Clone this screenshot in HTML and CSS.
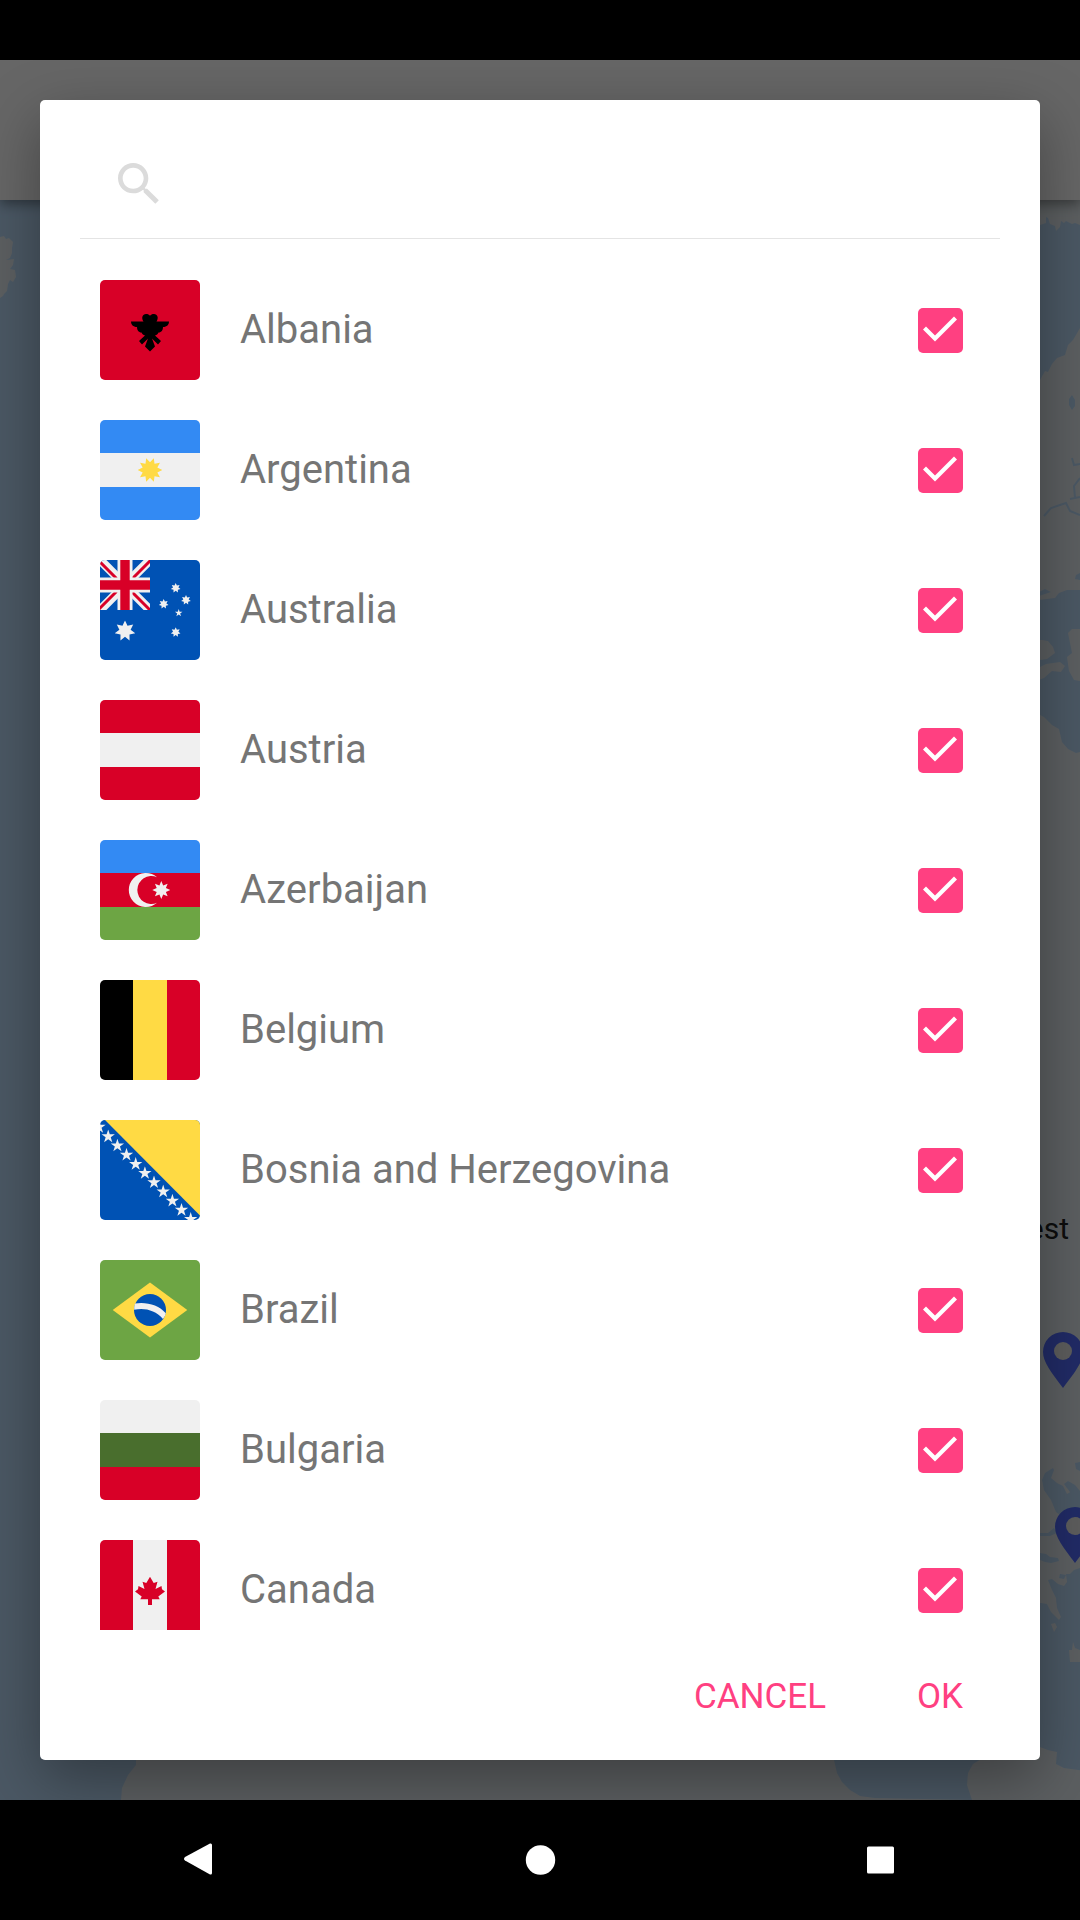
FILE: index.html
```html
<!DOCTYPE html>
<html lang="en">
<head>
<meta charset="utf-8">
<meta name="viewport" content="width=device-width, initial-scale=1">
<title>Countries</title>
<link rel="stylesheet" href="styles.css">
</head>
<body>
<svg class="symbols" aria-hidden="true">
  <symbol id="star5" viewBox="-10 -10 20 20"><path d="M0-10L2.25-3.09 9.51-3.09 3.63 1.18 5.88 8.09 0 3.82-5.88 8.09-3.63 1.18-9.51-3.09-2.25-3.09z"/></symbol>
  <symbol id="star7" viewBox="-10 -10 20 20"><path d="M0-10L2.39-4.95 7.82-6.23 5.36-1.22 9.75 2.23 4.3 3.43 4.34 9.01 0 5.5-4.34 9.01-4.3 3.43-9.75 2.23-5.36-1.22-7.82-6.23-2.39-4.95z"/></symbol>
</svg>
<div class="screen">
  <div class="status-bar"></div>
  <header class="app-bar"></header>
  <main class="map">
    <svg class="map-canvas" viewBox="0 0 1080 1600" preserveAspectRatio="xMidYMid slice" aria-hidden="true">
      <rect class="water" width="1080" height="1600"/>
      <g class="land">
        <path d="M0 37l4-1 2 3 3-1 4 4-1 6 0 5-2 5-4 2 8-1-1 6-3 4 5 1 1 7-3 5-3-2-2 4-1 7-3 3-1 2-3 2z"/>
        <path d="M900 0H1080V25l-5-2-3 1-6-3-2 2-3-2-1 6-4 4-1-5-5-2-2-6-2-1 0 6-6 2-60-2z"/>
        <path d="M900 180h140l5-9 3 1 4-8 5-6 8-3 3-10 5-5 7-12V390h-13l-8 3-4 5-16 2v-4l12-4-6-3-8 4-3-4-4 0-130 0z"/>
        <path d="M1020 440h22l6 1 5 6 2 6-8 6-7 1h-20zM1020 468h18l8-4 14-2 5 4-4 6-9-1-8 7-8 3h-16zM1068 433l4-4 8 0v52l-6-1-5-9-2-14 5-4z"/>
        <path d="M560 513H1036l8 4 8 8 7 4 3 13 6 7 8 4 4-1V1368l-6 2-4 4-4 0 1 8-3 4-6-2-6-5-4 1 4 10 4 8 1 10 4 9-2 3-8-8-4-8-6-1-30 6H560z"/>
        <path d="M1051 1424l4-1 2 4-3 5zM1069 1450l3 0 1-8 2 6 5 2v12h-10z"/>
        <path d="M136 1540H830l4 20 3 13 5 9 8 8 10 6 15 2 97 2H121l1-12 6-13 8-10z"/>
        <path d="M972 1600l-5-15 1-12 5-9 20-12 47-5 8 3 9 2-1 12 8 4 21 3v29z"/>
      </g>
      <g class="water">
        <path d="M1072 195l3 5 0 6-3 4-3-5 0-6z"/>
        <path d="M1076 375l4-2v7l-5-1z"/>
        <path d="M1053 1268l-8 5-3 7 2 10 7 10 5 12 8 6 16 4V1292l-8-1-5 3-4-8-6-3-6-5 3-8z"/>
        <path d="M1075 1263l5-1v9l-4-2zM1064 1284l4-3 7 4 5 6v5l-10-4z"/>
        <path d="M1040 1353l6 1 4 3 8 1 1 3-8 2-6-1-5-2zM1040 1333l8 0 6-5 3 5-7 3-10 0zM1060 1374l6 1-2 4-5-1z"/>
      </g>
      <g class="river">
        <path d="M1044 316l7-8 9-3 6-2 4 8 10 4M1072 258l2 7 6-1M1080 278l-6 8 1 12M1080 297l-10 2"/>
      </g>
      <text class="city" x="1069" y="1039" text-anchor="end">est</text>
      <g class="pin">
        <path d="M1063 1132a20 20 0 0 1 20 20c0 10-8 20-20 36c-12-16-20-26-20-36a20 20 0 0 1 20-20z"/>
        <circle class="pin-hole" cx="1063" cy="1151" r="9"/>
        <path d="M1075 1307a20 20 0 0 1 20 20c0 10-8 20-20 36c-12-16-20-26-20-36a20 20 0 0 1 20-20z"/>
        <circle class="pin-hole" cx="1075" cy="1326" r="9"/>
      </g>
    </svg>
  </main>
  <nav class="nav-bar">
    <button class="nav-button" aria-label="Back"><svg viewBox="0 0 40 40"><path d="M5 17L30 3.500Q32 3 32 5V33Q32 35 30 34.500L5 20.500Q3 19 5 17z"/></svg></button>
    <button class="nav-button" aria-label="Home"><svg viewBox="0 0 40 40"><circle cx="20.500" cy="20" r="14.700"/></svg></button>
    <button class="nav-button" aria-label="Recent apps"><svg viewBox="0 0 40 40"><rect x="7" y="6.500" width="27" height="27" rx="1.500"/></svg></button>
  </nav>

  <div class="overlay">
    <section class="dialog" role="dialog" aria-modal="true" aria-label="Select countries">
      <label class="search">
        <svg class="search-icon" viewBox="0 0 24 24" aria-hidden="true"><path d="M15.500 14h-.79l-.28-.27C15.410 12.590 16 11.110 16 9.500 16 5.910 13.090 3 9.500 3S3 5.910 3 9.500 5.910 16 9.500 16c1.610 0 3.090-.59 4.230-1.570l.27.28v.79l5 4.990L20.490 19l-4.990-5zm-6 0C7.010 14 5 11.990 5 9.500S7.010 5 9.500 5 14 7.010 14 9.500 11.990 14 9.500 14z"/></svg>
        <input class="search-input" type="text" aria-label="Search">
      </label>
      <ul class="countries">
        <li><label class="country">
          <svg class="flag" viewBox="0 0 100 100" aria-hidden="true"><rect class="red" width="100" height="100"/><path d="M31 41.500h12.500C41 38 42.500 34 46 34c2 0 3 .5 4 1.700C51 34.500 52 34 54 34c3.500 0 5 4 2.500 7.500H69c0 3-2 5.500-6 5.500 0 3-1.500 5.500-4.500 5.500-.5 1.500-2 2.500-3.500 3l6 5.500-3 3.500-6-6 3 8-5 5-5-5 3-8-6 6-3-3.500 6-5.500c-1.500-.5-3-1.500-3.500-3-3 0-4.500-2.500-4.500-5.500-4 0-6-2.500-6-5.500z"/></svg>
          <span class="name">Albania</span><input class="check" type="checkbox" checked></label></li>
        <li><label class="country">
          <svg class="flag" viewBox="0 0 100 100" aria-hidden="true"><rect class="sky" width="100" height="100"/><rect class="white" y="33" width="100" height="34"/><path class="yellow" transform="translate(50 50)" d="M12.300 0L7.320 2.380 9.950 7.230 4.530 6.230 3.800 11.700 0 7.700-3.800 11.700-4.530 6.230-9.950 7.230-7.320 2.380-12.300 0-7.320-2.380-9.950-7.230-4.530-6.230-3.800-11.700 0-7.700 3.800-11.700 4.530-6.230 9.950-7.230 7.320-2.380z"/></svg>
          <span class="name">Argentina</span><input class="check" type="checkbox" checked></label></li>
        <li><label class="country">
          <svg class="flag" viewBox="0 0 100 100" aria-hidden="true"><rect class="blue" width="100" height="100"/>
            <svg width="50" height="50" viewBox="0 0 50 50"><path stroke="#f0f0f0" stroke-width="9" d="M0 0L50 50M50 0L0 50"/><path stroke="#d80027" stroke-width="3" d="M-1 1L19 21M31 20L51 0M-1 49L19 29M31 31L51 51"/><path class="white" d="M17.500 0h15v17.500H50v15H32.500V50h-15V32.500H0v-15h17.500z"/><path class="red" d="M20.300 0h9.400v20.300H50v9.400H29.700V50h-9.400V29.700H0v-9.400h20.300z"/></svg>
            <g class="white"><use href="#star7" x="14.500" y="60.500" width="21" height="21"/><use href="#star7" x="70.700" y="23" width="10" height="10"/><use href="#star7" x="81" y="35" width="10" height="10"/><use href="#star7" x="58.700" y="39" width="10" height="10"/><use href="#star7" x="70.700" y="67.300" width="10" height="10"/><use href="#star5" x="74.700" y="49" width="8" height="8"/></g></svg>
          <span class="name">Australia</span><input class="check" type="checkbox" checked></label></li>
        <li><label class="country">
          <svg class="flag" viewBox="0 0 100 100" aria-hidden="true"><rect class="red" width="100" height="100"/><rect class="white" y="33" width="100" height="34"/></svg>
          <span class="name">Austria</span><input class="check" type="checkbox" checked></label></li>
        <li><label class="country">
          <svg class="flag" viewBox="0 0 100 100" aria-hidden="true"><rect class="sky" width="100" height="34"/><rect class="red" y="33" width="100" height="34"/><rect class="green" y="67" width="100" height="33"/><path class="white" d="M57 37.200A14 14 0 1 0 57 62.800A17 17 0 1 1 57 37.200z"/><path class="white" transform="translate(61.300 50)" d="M0-9L1.900-4.600 6.360-6.360 4.600-1.900 9 0 4.600 1.900 6.360 6.360 1.900 4.600 0 9-1.900 4.600-6.360 6.360-4.600 1.900-9 0-4.600-1.900-6.360-6.360-1.900-4.600z"/></svg>
          <span class="name">Azerbaijan</span><input class="check" type="checkbox" checked></label></li>
        <li><label class="country">
          <svg class="flag" viewBox="0 0 100 100" aria-hidden="true"><rect width="34" height="100"/><rect class="yellow" x="33" width="34" height="100"/><rect class="red" x="67" width="33" height="100"/></svg>
          <span class="name">Belgium</span><input class="check" type="checkbox" checked></label></li>
        <li><label class="country">
          <svg class="flag" viewBox="0 0 100 100" aria-hidden="true"><rect class="blue" width="100" height="100"/><path class="yellow" d="M5 0H100V95.500z"/>
            <g class="white"><use href="#star5" x="-8" y="0" width="14" height="14"/><use href="#star5" x="1.200" y="9.500" width="14" height="14"/><use href="#star5" x="10.400" y="18.700" width="14" height="14"/><use href="#star5" x="19.500" y="27.900" width="14" height="14"/><use href="#star5" x="28.700" y="37.100" width="14" height="14"/><use href="#star5" x="37.900" y="46.200" width="14" height="14"/><use href="#star5" x="47" y="55.400" width="14" height="14"/><use href="#star5" x="56.200" y="64.600" width="14" height="14"/><use href="#star5" x="65.400" y="73.800" width="14" height="14"/><use href="#star5" x="74.500" y="83" width="14" height="14"/><use href="#star5" x="83.700" y="92.100" width="14" height="14"/></g></svg>
          <span class="name">Bosnia and Herzegovina</span><input class="check" type="checkbox" checked></label></li>
        <li><label class="country">
          <svg class="flag" viewBox="0 0 100 100" aria-hidden="true"><rect class="green" width="100" height="100"/><path class="yellow" d="M50 22.500L87.300 50 50 77.500 12.700 50z"/><circle class="blue" cx="50" cy="50" r="16"/><path class="white" d="M35 43.500C46 41.500 59 45 65.800 53.200Q65.200 56.500 63 59C55.500 50.500 45 47.500 34.200 49.800Q34 46.500 35 43.500z"/></svg>
          <span class="name">Brazil</span><input class="check" type="checkbox" checked></label></li>
        <li><label class="country">
          <svg class="flag" viewBox="0 0 100 100" aria-hidden="true"><rect class="white" width="100" height="34"/><rect class="olive" y="33" width="100" height="34"/><rect class="red" y="67" width="100" height="33"/></svg>
          <span class="name">Bulgaria</span><input class="check" type="checkbox" checked></label></li>
        <li><label class="country">
          <svg class="flag" viewBox="0 0 100 100" aria-hidden="true"><rect class="red" width="100" height="100"/><rect class="white" x="33" width="34" height="100"/><path class="red" d="M50 36.700L53.700 43 57.500 41.700 55.500 49 61.500 46 62 49.300 65 51.500 58.300 56.500 59.700 59.300H52V65H48V59.300H40.300L41.700 56.500 35 51.500 38 49.300 38.500 46 44.500 49 42.500 41.700 46.300 43z"/></svg>
          <span class="name">Canada</span><input class="check" type="checkbox" checked></label></li>
      </ul>
      <div class="actions">
        <button class="action">CANCEL</button>
        <button class="action">OK</button>
      </div>
    </section>
  </div>
</div>
</body>
</html>
```
FILE: styles.css
```css
* {
  box-sizing: border-box;
}

body {
  margin: 0;
  background: #000;
  font-family: Roboto, "Liberation Sans", sans-serif;
}

button {
  padding: 0;
  border: 0;
  background: none;
  font: inherit;
}

.symbols {
  position: absolute;
  width: 0;
  height: 0;
}

.screen {
  position: relative;
  display: flex;
  flex-direction: column;
  height: 100vh;
  overflow: hidden;
}

.status-bar {
  flex: none;
  height: 60px;
  background: #000;
}

.app-bar {
  position: relative;
  flex: none;
  height: 140px;
  background: #fff;
  box-shadow: 0 4px 12px rgba(0, 0, 0, 0.4);
  z-index: 1;
}

.map {
  flex: 1;
  min-height: 0;
}

.map-canvas {
  display: block;
  width: 100%;
  height: 100%;
}

.water {
  fill: #bbdcfb;
}

.land {
  fill: #e6eef2;
}

.river {
  fill: none;
  stroke: #bbdcfb;
  stroke-width: 2;
}

.city {
  fill: #222;
  font-size: 30px;
}

.pin {
  fill: #536dfe;
}

.pin-hole {
  fill: #e8e8e8;
}

/* System navigation */
.nav-bar {
  flex: none;
  display: grid;
  grid-template-columns: repeat(3, 1fr);
  height: 120px;
  padding: 0 30px;
  background: #000;
}

.nav-button {
  display: grid;
  place-items: center;
}

.nav-button svg {
  width: 40px;
  height: 40px;
  fill: #fff;
}

/* Country picker */
.overlay {
  position: absolute;
  inset: 60px 0 120px;
  z-index: 2;
  display: flex;
  padding: 40px;
  overflow: hidden;
  background: rgba(0, 0, 0, 0.6);
}

.dialog {
  flex: 1;
  display: flex;
  flex-direction: column;
  min-width: 0;
  padding: 30px 40px 0;
  border-radius: 5px;
  background: #fff;
  box-shadow: 0 20px 60px rgba(0, 0, 0, 0.35);
}

.search {
  flex: none;
  display: flex;
  align-items: center;
  gap: 20px;
  height: 109px;
  margin-bottom: 21px;
  padding-left: 31px;
  border-bottom: 1px solid #e4e4e4;
}

.search-icon {
  flex: none;
  width: 56px;
  height: 56px;
  fill: #dbdbdb;
}

.search-input {
  flex: 1;
  min-width: 0;
  height: 80px;
  padding: 0;
  border: 0;
  outline: 0;
  background: none;
  color: #757575;
  font: inherit;
  font-size: 40px;
}

.countries {
  flex: 1;
  min-height: 0;
  margin: 0;
  padding: 0;
  overflow: hidden;
  list-style: none;
}

.country {
  display: flex;
  align-items: center;
  gap: 40px;
  padding: 20px 37px 20px 20px;
}

.flag {
  flex: none;
  width: 100px;
  height: 100px;
  border-radius: 5px;
  overflow: hidden;
}

.name {
  flex: 1;
  color: #757575;
  font-size: 40px;
  line-height: 48px;
}

.check {
  appearance: none;
  flex: none;
  width: 45px;
  height: 45px;
  margin: 0;
  border-radius: 5px;
  border: 5px solid #757575;
}

.check:checked {
  border: 0;
  background: #ff4081;
}

.check:checked::before {
  content: "";
  display: block;
  width: 45px;
  height: 45px;
  background: #fff;
  clip-path: polygon(5px 22px, 8px 19px, 17px 28px, 36px 9px, 39px 12px, 17px 34px);
}

.actions {
  flex: none;
  display: flex;
  justify-content: flex-end;
  gap: 14px;
  height: 130px;
  margin-right: -20px;
  padding: 22px 0 20px;
}

.action {
  min-width: 160px;
  padding: 0 20px;
  color: #ff4081;
  font-size: 35px;
}

.red { fill: #d80027; }
.white { fill: #f0f0f0; }
.blue { fill: #0052b4; }
.sky { fill: #338af3; }
.green { fill: #6da544; }
.olive { fill: #496e2d; }
.yellow { fill: #ffda44; }
```
